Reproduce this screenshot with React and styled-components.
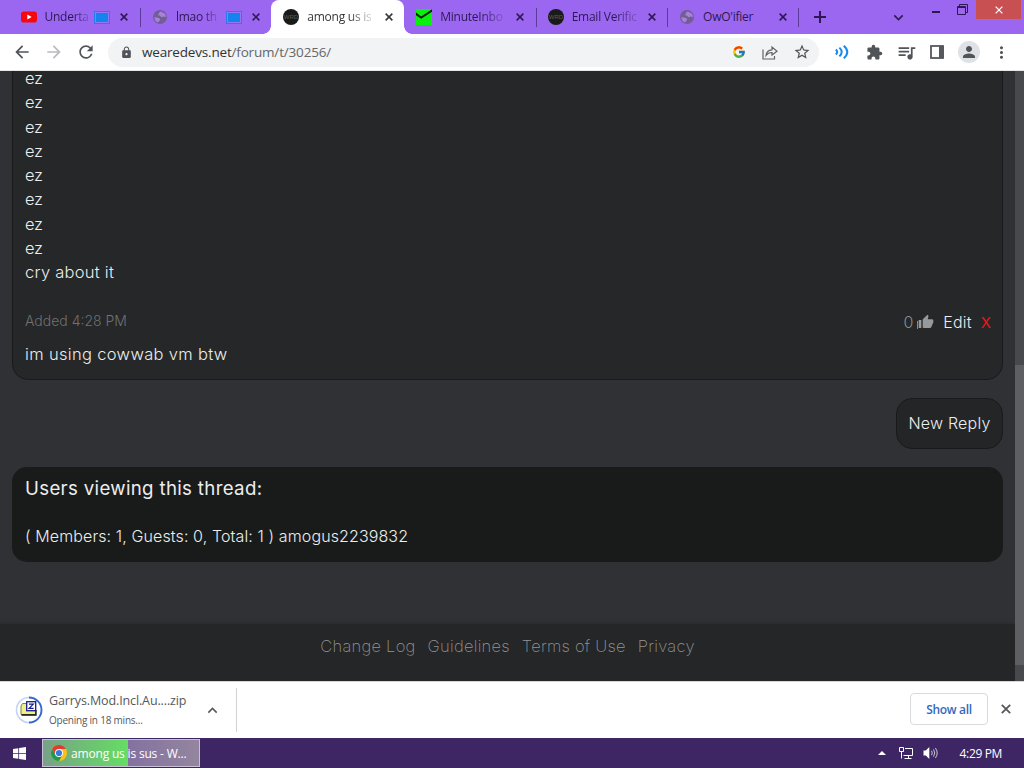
import styled, { createGlobalStyle } from "styled-components";
import {
  MdArrowBack,
  MdArrowForward,
  MdExpandLess,
  MdExpandMore,
  MdExtension,
  MdLock,
  MdMoreVert,
  MdPerson,
  MdQueueMusic,
  MdRefresh,
  MdStarBorder,
  MdThumbUp,
} from "react-icons/md";
import { FcGoogle } from "react-icons/fc";

const tabs = [
  { title: "Underta", icon: "youtube", screen: true, line: true },
  { title: "lmao th", icon: "globe", screen: true },
  { title: "among us is", icon: "wrd", active: true },
  { title: "MinuteInbo", icon: "check", line: true },
  { title: "Email Verific", icon: "wrd", line: true },
  { title: "OwO'ifier", icon: "globe", line: true, whole: true },
];

const postLines = ["ez", "ez", "ez", "ez", "ez", "ez", "ez", "ez", "cry about it"];

export default function App() {
  return (
    <>
      <GlobalStyle />
      <Screen>
        <TabStrip>
          {tabs.map((tab) => (
            <Tab key={tab.title} $active={tab.active} $line={tab.line}>
              <Favicon name={tab.icon} />
              <TabTitle $fade={!tab.whole}>{tab.title}</TabTitle>
              <TabEnd>
                {tab.screen && <SharedScreen />}
                <Cross size={8} width={1.9} />
              </TabEnd>
            </Tab>
          ))}
          <NewTab>
            <svg width="12" height="12" viewBox="0 0 12 12" stroke="currentColor" strokeWidth="2">
              <path d="M6 0V12M0 6H12" />
            </svg>
          </NewTab>
          <TabSearch>
            <MdExpandMore size={19} />
          </TabSearch>
          <WindowButtons>
            <Minimize />
            <svg width="11" height="11" viewBox="0 0 11 11" fill="none" stroke="#2d1854">
              <path d="M2.5 2.5V.5H10.5V8.5H8.5" />
              <path d="M.5 2.5H8.5V10.5H.5Z" />
              <path d="M.5 3.5H8.5" />
            </svg>
            <CloseWindow>
              <Cross size={8} width={1.6} />
            </CloseWindow>
          </WindowButtons>
        </TabStrip>

        <Toolbar>
          <NavButtons>
            <MdArrowBack size={20} />
            <MdArrowForward size={20} color="#b9bbbe" />
            <MdRefresh size={20} />
          </NavButtons>
          <AddressBar>
            <MdLock size={13} />
            <Url>
              wearedevs.net<span>/forum/t/30256/</span>
            </Url>
            <AddressActions>
              <FcGoogle size={14} />
              <ShareIcon />
              <MdStarBorder size={18} />
            </AddressActions>
          </AddressBar>
          <Extensions>
            <WavesIcon />
            <MdExtension size={17} />
            <MdQueueMusic size={21} />
            <SidePanelIcon />
            <Avatar>
              <MdPerson size={18} />
            </Avatar>
            <MdMoreVert size={19} />
          </Extensions>
        </Toolbar>

        <Viewport>
          <Page>
            <Post>
              {postLines.map((line, i) => (
                <PostLine key={i}>{line}</PostLine>
              ))}
              <PostMeta>
                <Added>Added 4:28 PM</Added>
                <PostActions>
                  <Likes>0</Likes>
                  <LikeBar />
                  <MdThumbUp size={16} color="#97999b" />
                  <Edit>Edit</Edit>
                  <Delete>X</Delete>
                </PostActions>
              </PostMeta>
              <Addition>im using cowwab vm btw</Addition>
            </Post>
            <NewReply>New Reply</NewReply>
            <Viewers>
              <ViewersTitle>Users viewing this thread:</ViewersTitle>
              <ViewersList>( Members: 1, Guests: 0, Total: 1 ) amogus2239832</ViewersList>
            </Viewers>
            <Footer>
              <FooterLink>Change Log</FooterLink>
              <FooterLink>Guidelines</FooterLink>
              <FooterLink>Terms of Use</FooterLink>
              <FooterLink>Privacy</FooterLink>
            </Footer>
          </Page>
          <Scrollbar>
            <Thumb />
          </Scrollbar>
        </Viewport>

        <Downloads>
          <ZipIcon />
          <FileInfo>
            <FileName>Garrys.Mod.Incl.Au....zip</FileName>
            <FileStatus>Opening in 18 mins...</FileStatus>
          </FileInfo>
          <FileMenu>
            <MdExpandLess size={19} />
          </FileMenu>
          <ShowAll>Show all</ShowAll>
          <Dismiss>
            <Cross size={10} width={1.8} />
          </Dismiss>
        </Downloads>

        <Taskbar>
          <svg width="13" height="13" viewBox="0 0 13 13" fill="#fff">
            <path d="M0 2L5.3 1.2V6H0ZM6.1 1.1L13 0V6H6.1ZM0 6.8H5.3V11.7L0 10.9ZM6.1 6.8H13V13L6.1 11.9Z" />
          </svg>
          <TaskButton>
            <ChromeIcon />
            <span>among us is sus - W...</span>
          </TaskButton>
          <Tray>
            <svg width="8" height="4" viewBox="0 0 8 4" fill="#fff">
              <path d="M0 4L4 0L8 4Z" />
            </svg>
            <NetworkIcon />
            <SpeakerIcon />
            <Clock>4:29 PM</Clock>
          </Tray>
        </Taskbar>
      </Screen>
    </>
  );
}

function Cross({ size, width }) {
  return (
    <svg width={size} height={size} viewBox="0 0 10 10" fill="none" stroke="currentColor" strokeWidth={width}>
      <path d="M.8 .8L9.2 9.2M9.2 .8L.8 9.2" />
    </svg>
  );
}

function Favicon({ name }) {
  if (name === "youtube") {
    return (
      <svg width="16" height="16" viewBox="0 0 16 16">
        <rect y="2.4" width="16" height="11.2" rx="2.8" fill="#f5090f" />
        <path d="M6.3 5.5L10.7 8L6.3 10.5Z" fill="#fff" />
      </svg>
    );
  }
  if (name === "check") {
    return (
      <svg width="16" height="16" viewBox="0 0 16 16">
        <rect width="16" height="16" fill="#08f00c" />
        <path d="M0 3.5L5.2 7.4L16 .3V2.8L5.2 9.8L0 6.2Z" fill="#07200a" />
      </svg>
    );
  }
  if (name === "wrd") {
    return (
      <svg width="16" height="16" viewBox="0 0 16 16">
        <circle cx="8" cy="8" r="8" fill="#191b19" />
        <text x="8" y="10.2" fontSize="6" fill="#5c5e58" textAnchor="middle" fontFamily="Liberation Sans">
          WRD
        </text>
      </svg>
    );
  }
  return (
    <svg width="16" height="16" viewBox="0 0 16 16">
      <circle cx="8" cy="8" r="7" fill="#735e92" />
      <path
        d="M8.8 2.6L13 4.8L14.2 8L11.8 7.6L9.6 8.2L7.4 6.2L6 6.4L7.2 3.4ZM2.2 8.2L5.2 8.6L8.2 9.8L7.6 11.8L5.8 13.6L3.4 11.8Z"
        fill="#a681e0"
      />
    </svg>
  );
}

function SharedScreen() {
  return (
    <svg width="16" height="13" viewBox="0 0 16 13">
      <rect x=".5" y=".5" width="15" height="12" fill="#8e78f4" stroke="#2b79ef" />
      <rect x="2" y="2" width="12" height="9" fill="#1583ee" />
    </svg>
  );
}

function ShareIcon() {
  return (
    <svg width="16" height="15" viewBox="0 0 16 15" fill="none" stroke="#606368" strokeWidth="1.2">
      <path d="M1 4.5V14H12.5V11" />
      <path d="M4 10.5C4.3 6.8 6.6 5 10 4.8V2L15 6.2L10 10V7.5C7.3 7.4 5.5 8.4 4 10.5Z" />
    </svg>
  );
}

function WavesIcon() {
  return (
    <svg width="14" height="14" viewBox="0 0 14 14" fill="none" stroke="#1689ee" strokeWidth="2">
      <path d="M.8 4.5Q3.6 7 .8 9.5" />
      <path d="M4.4 2.6Q9 7 4.4 11.4" />
      <path d="M8.8 .8Q15.8 7 8.8 13.2" />
    </svg>
  );
}

function SidePanelIcon() {
  return (
    <svg width="14" height="14" viewBox="0 0 14 14">
      <rect x="1" y="1" width="12" height="12" fill="none" stroke="#55585c" strokeWidth="1.8" />
      <rect x="9" y="1" width="5" height="12" fill="#55585c" />
    </svg>
  );
}

function ZipIcon() {
  return (
    <svg width="28" height="28" viewBox="0 0 28 28">
      <circle cx="14" cy="14" r="12.5" fill="none" stroke="#c4d4f5" strokeWidth="1.6" />
      <path d="M14 1.5A12.5 12.5 0 0 1 14 26.5" fill="none" stroke="#3668ce" strokeWidth="1.8" />
      <path d="M6 10L7.5 7.5H11.5L13 9.5H20.5V18.5H6Z" fill="#eef08a" stroke="#7c8148" />
      <path d="M6.5 19H21V14" fill="none" stroke="#111" strokeWidth="1.3" />
      <rect x="11.7" y="5.7" width="9" height="9" fill="#fff" stroke="#171c8a" strokeWidth="1.3" />
      <path d="M13.9 8.1H18.3L14.1 12.4H18.6" fill="none" stroke="#171c8a" strokeWidth="1.2" />
    </svg>
  );
}

function ChromeIcon() {
  return (
    <svg width="16" height="16" viewBox="0 0 16 16">
      <circle cx="8" cy="8" r="8" fill="#fbc116" />
      <path d="M1.07 4A8 8 0 0 1 14.93 4H8L4.5 10Z" fill="#e33b2e" />
      <path d="M1.07 4A8 8 0 0 0 8 16L11.5 10H4.5Z" fill="#229a4c" />
      <circle cx="8" cy="8" r="4" fill="#fff" />
      <circle cx="8" cy="8" r="3.1" fill="#3478e5" />
    </svg>
  );
}

function NetworkIcon() {
  return (
    <svg width="15" height="14" viewBox="0 0 15 14" fill="none" stroke="#fff" strokeWidth="1">
      <path d="M6 2.5H13.5V9.5H4.5M9.5 9.5V12M5.5 12.5H12.5" />
      <path d="M.5 1.5H4.5V5.5H.5ZM2.5 5.5V12.5" />
    </svg>
  );
}

function SpeakerIcon() {
  return (
    <svg width="15" height="14" viewBox="0 0 15 14">
      <path d="M.5 4.5H2.8L6.3 1V13L2.8 9.5H.5Z" fill="#fff" />
      <path d="M8.5 4.8Q10 7 8.5 9.2M10.5 3.4Q13 7 10.5 10.6M12.4 2Q16 7 12.4 12" fill="none" stroke="#ddd" strokeWidth=".9" />
    </svg>
  );
}

const GlobalStyle = createGlobalStyle`
  * {
    box-sizing: border-box;
  }
  body {
    margin: 0;
    overflow: hidden;
  }
  svg {
    display: block;
    flex: none;
  }
`;

const Screen = styled.div`
  display: flex;
  flex-direction: column;
  width: 1024px;
  height: 768px;
  overflow: hidden;
  font-family: "Open Sans", "Noto Sans", sans-serif;
  white-space: nowrap;
`;

const TabStrip = styled.header`
  display: flex;
  height: 34px;
  flex: none;
  padding-left: 8.5px;
  background-color: #9b67f0;
  color: #2d1854;
`;

const Tab = styled.div`
  position: relative;
  display: flex;
  align-items: center;
  width: ${({ $active }) => ($active ? 133 : 131.4)}px;
  padding: 0 11.5px 0 12px;
  flex: none;
  border-radius: 8px 8px 0 0;
  background-color: ${({ $active }) => ($active ? "#fff" : "transparent")};
  color: ${({ $active }) => ($active ? "#35363a" : "#2d1854")};

  &::after {
    content: "";
    position: absolute;
    right: -1px;
    top: 8px;
    width: 1px;
    height: 19px;
    background-color: ${({ $line }) => ($line ? "#5d3b9a" : "transparent")};
  }

  &::before {
    content: "";
    position: absolute;
    left: -8px;
    right: -8px;
    bottom: 0;
    height: 8px;
    background: ${({ $active }) =>
      $active
        ? "radial-gradient(circle at 0 0, transparent 7.5px, #fff 8px) left / 8px 8px no-repeat, radial-gradient(circle at 100% 0, transparent 7.5px, #fff 8px) right / 8px 8px no-repeat"
        : "none"};
  }
`;

const TabTitle = styled.span`
  margin-left: 8px;
  font-size: 12px;
  line-height: 18px;
  letter-spacing: -0.25px;
  mask-image: ${({ $fade }) => ($fade ? "linear-gradient(to right, #000 65%, rgba(0, 0, 0, 0.2))" : "none")};
`;

const TabEnd = styled.div`
  display: flex;
  align-items: center;
  gap: 10px;
  margin-left: auto;
`;

const NewTab = styled.div`
  display: flex;
  align-items: center;
  margin-left: 16px;
`;

const TabSearch = styled.div`
  display: flex;
  align-items: center;
  margin-left: auto;
  margin-right: 24px;
`;

const WindowButtons = styled.div`
  display: flex;
  align-items: flex-start;

  & > svg {
    margin: 4px 8px 0 17px;
  }
`;

const Minimize = styled.div`
  width: 8px;
  height: 2px;
  margin-top: 11px;
  background-color: #2d1854;
`;

const CloseWindow = styled.div`
  display: flex;
  align-items: center;
  justify-content: center;
  width: 45px;
  height: 19px;
  margin-right: 3px;
  background-color: #c84f52;
  color: #fff;
`;

const Toolbar = styled.div`
  display: flex;
  align-items: center;
  height: 37px;
  flex: none;
  border-bottom: 1px solid #e4e6e8;
  background-color: #fff;
  color: #505358;
`;

const NavButtons = styled.div`
  display: flex;
  gap: 12px;
  width: 108px;
  padding-left: 12px;
`;

const AddressBar = styled.div`
  display: flex;
  align-items: center;
  width: 711px;
  height: 29px;
  padding: 0 8px 0 12px;
  border-radius: 15px;
  background-color: #f1f3f4;
`;

const Url = styled.div`
  margin-left: 9px;
  padding-bottom: 1px;
  font-size: 13.5px;
  letter-spacing: -0.18px;
  color: #303236;

  span {
    color: #64676b;
  }
`;

const AddressActions = styled.div`
  display: flex;
  align-items: center;
  gap: 15.5px;
  margin-left: auto;
`;

const Extensions = styled.div`
  display: flex;
  align-items: center;
  gap: 14px;
  margin-left: 16px;

  & > svg:first-child {
    margin-right: 3px;
  }
  & > svg:nth-child(3) {
    margin: 0 -1px 0 -1px;
  }
  & > svg:last-child {
    margin-left: -2px;
  }
`;

const Avatar = styled.div`
  display: flex;
  align-items: center;
  justify-content: center;
  width: 22px;
  height: 22px;
  border-radius: 50%;
  background-color: #dee1e6;
`;

const Viewport = styled.div`
  display: flex;
  height: 610px;
  flex: none;
  overflow: hidden;
`;

const Page = styled.main`
  display: flex;
  flex-direction: column;
  width: 1015px;
  background-color: #303135;
  color: #eceded;
  font-family: Inter, sans-serif;
  font-weight: 300;
  font-size: 16px;
`;

const Post = styled.article`
  height: 329px;
  flex: none;
  margin: -20px 12px 0;
  padding: 14px 12px 0;
  border: 1px solid #191a1c;
  border-radius: 16px;
  background-color: #252728;
`;

const PostLine = styled.div`
  font-size: 16.5px;
  line-height: 24.25px;
  letter-spacing: 0.25px;

  &:not(:nth-child(9)) {
    letter-spacing: -0.2px;
  }
`;

const PostMeta = styled.div`
  display: flex;
  justify-content: space-between;
  align-items: center;
  height: 24px;
  margin-top: 24px;
`;

const Added = styled.span`
  font-size: 14px;
  color: #6f7172;
`;

const PostActions = styled.div`
  display: flex;
  align-items: center;
  padding-top: 4px;
`;

const Likes = styled.span`
  color: #8a8c8d;
`;

const LikeBar = styled.i`
  width: 1px;
  height: 8px;
  margin: 5px 0 0 4px;
  background-color: #8a8c8d;
`;

const Edit = styled.span`
  margin-left: 9px;
  letter-spacing: 0.2px;
`;

const Delete = styled.span`
  margin-left: 9px;
  margin-right: -1px;
  font-size: 15px;
  font-weight: 400;
  color: #f01418;
`;

const Addition = styled.div`
  margin-top: 10px;
  font-size: 16.5px;
  line-height: 24px;
  letter-spacing: 0.33px;
`;

const NewReply = styled.button`
  align-self: flex-end;
  width: 107px;
  height: 51px;
  flex: none;
  margin: 18px 12px 18px 0;
  padding: 0 0 2px;
  border: 1px solid #191a1c;
  border-radius: 16px;
  background-color: #232526;
  color: inherit;
  font: inherit;
  letter-spacing: 0.2px;
`;

const Viewers = styled.section`
  height: 95px;
  flex: none;
  margin: 0 12px;
  padding: 8px 13px;
  border-radius: 15px;
  background-color: #191b1b;
`;

const ViewersTitle = styled.h3`
  margin: 0 0 21px;
  font-size: 18.7px;
  font-weight: 400;
  line-height: 28px;
  letter-spacing: 0.32px;
`;

const ViewersList = styled.div`
  line-height: 24px;
  letter-spacing: 0.11px;
`;

const Footer = styled.footer`
  display: flex;
  justify-content: center;
  gap: 12px;
  height: 57px;
  flex: none;
  margin-top: auto;
  padding-top: 10px;
  background-color: #242627;
  box-shadow: 0 0 4px #242627;
`;

const FooterLink = styled.a`
  font-size: 16.5px;
  font-weight: 200;
  line-height: 24px;
  letter-spacing: 0.25px;
  color: #919394;
`;

const Scrollbar = styled.div`
  width: 9px;
  padding-top: 294px;
  background-color: #48494c;
`;

const Thumb = styled.div`
  height: 300px;
  background-color: #5e5f63;
`;

const Downloads = styled.div`
  display: flex;
  align-items: center;
  height: 57px;
  flex: none;
  padding: 0 13px 0 15px;
  border-top: 1px solid #d5d7da;
  background-color: #fff;
`;

const FileInfo = styled.div`
  width: 138px;
  margin-left: 6px;
`;

const FileName = styled.div`
  font-size: 12.5px;
  line-height: 20px;
  letter-spacing: -0.12px;
  color: #55585b;
`;

const FileStatus = styled.div`
  font-size: 10px;
  line-height: 19px;
  letter-spacing: -0.22px;
  color: #55585b;
`;

const FileMenu = styled.div`
  display: flex;
  align-items: center;
  width: 50px;
  height: 44px;
  padding-left: 16px;
  border-right: 1px solid #d0d2d5;
  color: #55585c;
`;

const ShowAll = styled.button`
  width: 78px;
  height: 32px;
  margin-left: auto;
  margin-top: -2px;
  padding: 0;
  border: 1px solid #d8dadd;
  border-radius: 4px;
  background-color: #fff;
  color: #3269be;
  font-family: inherit;
  font-size: 12px;
  font-weight: 550;
  letter-spacing: -0.3px;
`;

const Dismiss = styled.div`
  margin-left: 13px;
  margin-top: -2px;
  color: #55585c;
`;

const Taskbar = styled.div`
  display: flex;
  align-items: center;
  height: 30px;
  flex: none;
  padding-left: 13px;
  background-color: #3e2664;
`;

const TaskButton = styled.div`
  display: flex;
  align-items: center;
  gap: 4px;
  width: 158px;
  height: 28px;
  margin-left: 16px;
  padding-left: 8px;
  border: 1px solid #c9c0d8;
  background: linear-gradient(to right, #77a287, #65dd63 85px, #83729f 85px, #94859f);
  color: #fff;
  font-size: 12px;
  letter-spacing: -0.18px;
`;

const Tray = styled.div`
  display: flex;
  align-items: center;
  margin-left: auto;
  padding-right: 22px;

  svg + svg {
    margin-left: 9px;
  }
  svg:first-child {
    margin-right: 4px;
  }
`;

const Clock = styled.span`
  margin-left: 22px;
  color: #fff;
  font-size: 12px;
  letter-spacing: -0.35px;
`;
